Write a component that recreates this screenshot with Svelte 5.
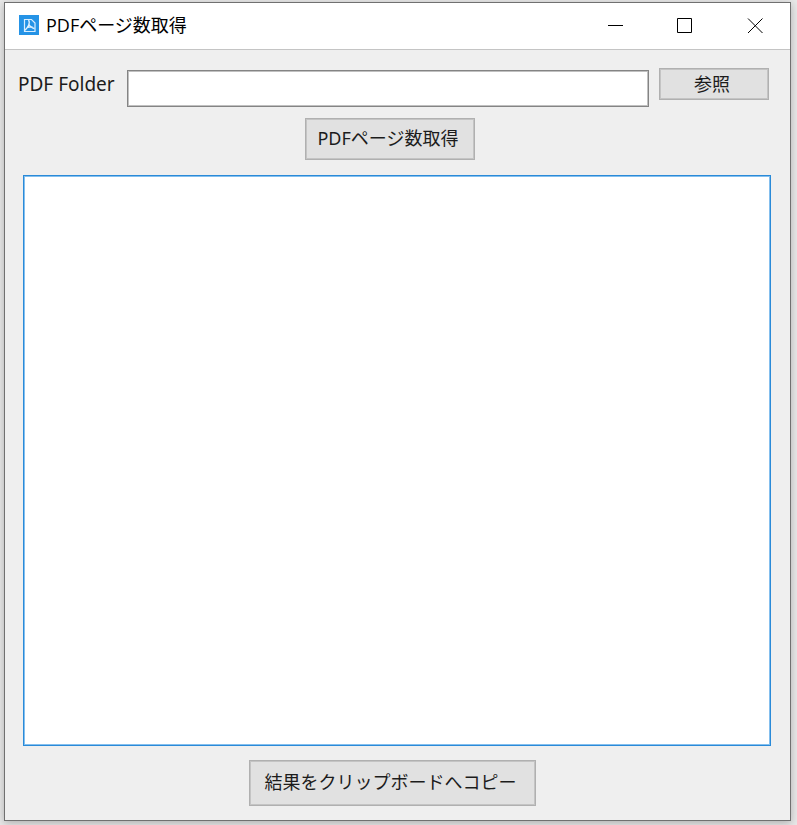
<script>
  let folder = '';
  let result = '';
  let picker;

  function handleBrowse() {
    picker.click();
  }

  function handlePicked(event) {
    const files = event.target.files;
    if (files.length > 0) {
      folder = files[0].webkitRelativePath.split('/')[0];
    }
  }

  function handleCountClick() {
    const names = [...(picker.files ?? [])]
      .map((file) => file.name)
      .filter((name) => name.toLowerCase().endsWith('.pdf'));
    result = names.join('\n');
  }

  function handleCopyClick() {
    navigator.clipboard.writeText(result);
  }
</script>

<div class="desktop">
  <main class="window">
    <header class="titlebar">
      <svg class="logo" width="20" height="20" viewBox="0 0 20 20" aria-hidden="true">
        <rect width="20" height="20" fill="#2593e6" />
        <path d="M5.5 4.5h7l3.500 3.500v8.500H5.500z" fill="none" stroke="#d8edff" stroke-width="1.2" />
        <path
          d="M9.500 5c1.200 1.500 .8 3.500 .2 5-.7 2-1.900 3.600-3.700 5.200M9.800 9c.8 2 2.800 3.800 5.700 4.500M7.500 13c2-.9 4-1.200 6-1"
          fill="none"
          stroke="#e4f3ff"
          stroke-width="1.3"
        />
      </svg>
      <h1>PDFページ数取得</h1>
      <div class="controls">
        <button aria-label="最小化">
          <svg width="16" height="16" viewBox="0 0 16 16"><path d="M1 7.5h15" /></svg>
        </button>
        <button aria-label="最大化">
          <svg width="16" height="16" viewBox="0 0 16 16"><path d="M.5.5h14v14H.5z" /></svg>
        </button>
        <button aria-label="閉じる">
          <svg width="16" height="16" viewBox="0 0 16 16"><path d="M1 .5l14.500 14.500M15.500.5L1 15" /></svg>
        </button>
      </div>
    </header>

    <div class="content">
      <div class="folder-row">
        <label for="folder">PDF Folder</label>
        <input id="folder" type="text" bind:value={folder} />
        <button class="btn browse" on:click={handleBrowse}>参照</button>
        <input type="file" webkitdirectory hidden bind:this={picker} on:change={handlePicked} />
      </div>

      <div class="action-row">
        <button class="btn count" on:click={handleCountClick}>PDFページ数取得</button>
      </div>

      <textarea aria-label="結果" bind:value={result}></textarea>

      <div class="action-row copy-row">
        <button class="btn copy" on:click={handleCopyClick}>結果をクリップボードへコピー</button>
      </div>
    </div>
  </main>
</div>

<style>
  :global(body) {
    margin: 0;
    background-color: #e8e8e8;
  }

  .desktop {
    display: flex;
    box-sizing: border-box;
    min-height: 100vh;
    padding: 2px 6px 4px 4px;
    font-family: "Noto Sans", "Noto Sans CJK JP", sans-serif;
    font-size: 18px;
    color: #1c1c1c;
  }

  .window {
    flex: 1;
    display: flex;
    flex-direction: column;
    border: 1px solid #707070;
    background-color: #efefef;
    box-shadow: 0 2px 8px rgba(0, 0, 0, 0.25);
  }

  .titlebar {
    display: flex;
    align-items: center;
    height: 46px;
    padding-left: 14px;
    border-bottom: 1px solid #c4c4c4;
    background-color: #fff;
  }

  .logo {
    margin-bottom: 2px;
  }

  h1 {
    flex: 1;
    margin: 0 0 2px 7px;
    font-family: "Open Sans", "Noto Sans CJK JP", sans-serif;
    font-size: 18px;
    font-weight: 400;
    line-height: 24px;
    color: #000;
  }

  .controls {
    display: flex;
    height: 100%;
  }

  .controls button {
    display: flex;
    align-items: center;
    justify-content: center;
    width: 70px;
    padding: 0;
    border: none;
    background: none;
  }

  .controls button:hover {
    background-color: #e5e5e5;
  }

  .controls path {
    fill: none;
    stroke: #000;
    stroke-width: 1;
  }

  .content {
    flex: 1;
    display: flex;
    flex-direction: column;
    padding: 18px 19px 14px 18px;
  }

  .folder-row {
    display: flex;
    align-items: flex-start;
    margin-left: -5px;
  }

  label {
    width: 109px;
    font-size: 19px;
    line-height: 32px;
  }

  input[type='text'] {
    flex: 1;
    box-sizing: border-box;
    min-width: 0;
    height: 37px;
    margin: 2px 10px 0 0;
    padding: 0 6px;
    border: 1px solid #848484;
    outline: 1px solid #c0c0c0;
    outline-offset: -2px;
    background-color: #fff;
    font: inherit;
  }

  .btn {
    box-sizing: border-box;
    padding: 0 4px 2px 0;
    border: 1px solid #b0b0b0;
    outline: 1px solid #c4c4c4;
    outline-offset: -2px;
    background-color: #e1e1e1;
    font-family: "Noto Sans", "Noto Sans CJK JP", sans-serif;
    font-size: 18px;
    line-height: 24px;
    color: #1c1c1c;
  }

  .btn:hover {
    background-color: #e5f1fb;
  }

  .browse {
    width: 110px;
    height: 32px;
    padding-bottom: 0;
    margin-right: 2px;
  }

  .action-row {
    display: flex;
    justify-content: center;
    padding-right: 14px;
  }

  .copy-row {
    padding-right: 9px;
  }

  .count {
    width: 170px;
    height: 42px;
    margin-top: 11px;
  }

  .copy {
    width: 287px;
    height: 46px;
  }

  textarea {
    flex: 1;
    box-sizing: border-box;
    width: 100%;
    min-height: 200px;
    margin: 15px 0 14px;
    padding: 6px;
    border: 1px solid #2a8ad8;
    outline: 1px solid #84bfee;
    outline-offset: -2px;
    background-color: #fff;
    font: inherit;
    resize: none;
  }
</style>
